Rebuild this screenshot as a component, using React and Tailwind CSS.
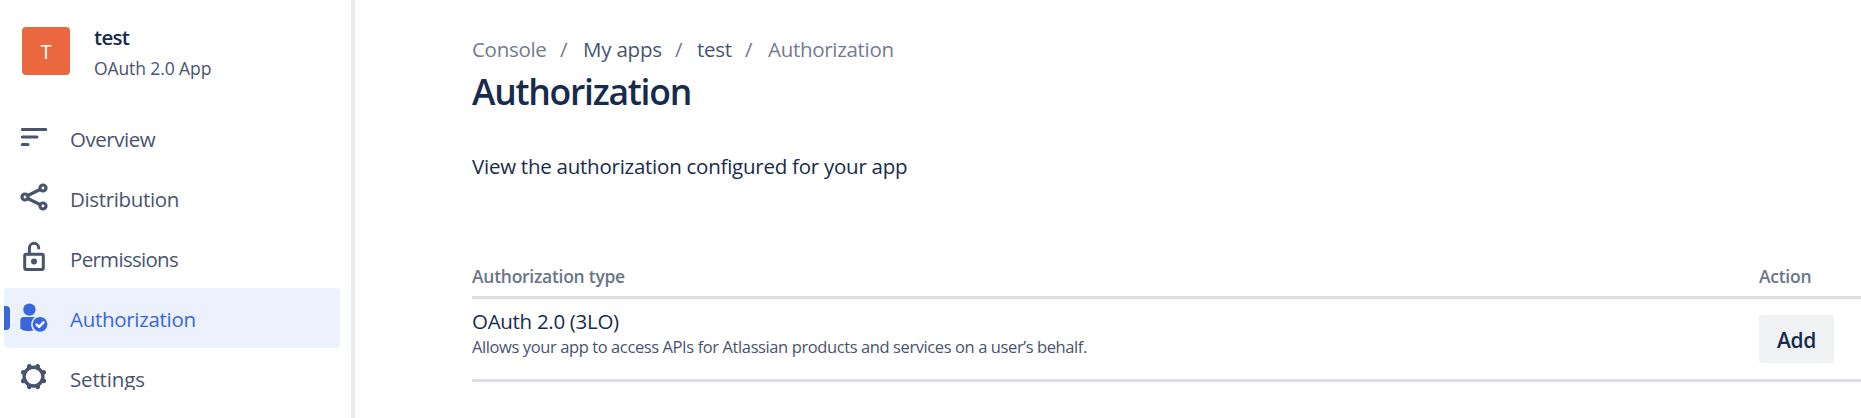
import React from "react";

const OverviewIcon = () => (
  <svg width="28" height="28" viewBox="0 0 28 28" fill="none" stroke="currentColor" strokeWidth="3" strokeLinecap="round">
    <path d="M2.3 6.5h23.5M2.3 14h14.7M2.3 21.5h5.7" />
  </svg>
);

const ShareIcon = () => (
  <svg width="28" height="28" viewBox="0 0 28 28" fill="none" stroke="currentColor" strokeWidth="3.2">
    <circle cx="5" cy="14" r="3" />
    <circle cx="23" cy="5" r="3" />
    <circle cx="23" cy="23" r="3" />
    <path d="M7.8 12.5 20 6.5M7.8 15.5 20 21.5" />
  </svg>
);

const LockIcon = () => (
  <svg width="28" height="32" viewBox="0 0 28 32" fill="none" stroke="currentColor" strokeWidth="3" strokeLinecap="round">
    <rect x="4.7" y="13.2" width="18.6" height="15.2" rx="1.5" />
    <path d="M9.4 13V7a4.65 4.65 0 0 1 9.3 0" />
    <circle cx="14" cy="20.4" r="3" fill="currentColor" stroke="none" />
  </svg>
);

const UserCheckIcon = () => (
  <svg width="28" height="30" viewBox="0 0 28 30" fill="none">
    <circle cx="9.4" cy="7.6" r="6.2" fill="currentColor" />
    <path d="M0.3 18.5a3.5 3.5 0 0 1 3.5-3.5H15c-2.5 2-3.8 4.5-3.8 7.5 0 2.3.8 4.4 2.2 6-1.3.3-2.5.4-3.9.4-6 0-9.2-1.3-9.2-3.2z" fill="currentColor" />
    <circle cx="20" cy="22.3" r="7.4" fill="currentColor" />
    <path d="m16.7 22.6 2.4 2.3 4.4-4.6" stroke="#fff" strokeWidth="2.5" strokeLinecap="round" strokeLinejoin="round" />
  </svg>
);

const GearIcon = () => (
  <svg width="28" height="28" viewBox="0 0 28 28" fill="none" stroke="currentColor">
    <circle cx="13.5" cy="13.6" r="9.4" strokeWidth="3.4" />
    {[22.5, 67.5, 112.5, 157.5, 202.5, 247.5, 292.5, 337.5].map((a) => (
      <path key={a} d="M13.5 3.5V2.4" strokeWidth="4.6" strokeLinecap="round" transform={`rotate(${a} 13.5 13.6)`} />
    ))}
  </svg>
);

const items = [
  { label: "Overview", Icon: OverviewIcon, track: "tracking-[-0.45px]" },
  { label: "Distribution", Icon: ShareIcon, track: "tracking-[-0.35px]" },
  { label: "Permissions", Icon: LockIcon, track: "tracking-[-0.7px]" },
  { label: "Authorization", Icon: UserCheckIcon, track: "tracking-[-0.3px]", selected: true },
  { label: "Settings", Icon: GearIcon, track: "tracking-[-0.15px]", clipped: true },
];

function NavItem({ label, Icon, track, selected, clipped }) {
  return (
    <a className={`relative flex h-[60px] w-[336px] items-center overflow-hidden rounded pl-4 ${selected ? "bg-[#ebf1fd] text-[#3a66dc]" : "text-[#48546f]"}`}>
      {selected && <span className="absolute left-0 top-[18px] h-6 w-1.5 rounded-r bg-[#3a66dc]" />}
      <span className="flex w-[50px] shrink-0 -mt-0.5"><Icon /></span>
      <span className={`mt-0.5 text-[20.5px] leading-[30px] ${track} ${clipped ? "[clip-path:inset(0_0_4px_0)]" : ""}`}>{label}</span>
    </a>
  );
}

export default function App() {
  return (
    <div className="flex h-[418px] w-[1861px] overflow-hidden bg-white font-['Open_Sans','Noto_Sans',sans-serif] whitespace-nowrap text-[#172b4d]">
      <aside className="w-[355px] shrink-0 border-r-4 border-[#ebecf0] pl-1">
        <header className="flex h-[108px] pl-[18px] pt-[27px]">
          <div className="flex size-12 items-center justify-center rounded bg-[#eb6740] text-[20px] text-white pt-0.5">T</div>
          <div className="ml-6 -mt-[5px]">
            <div className="text-[20.5px] font-semibold leading-[30px] tracking-[-0.7px]">test</div>
            <div className="mt-px text-[17.5px] leading-[30px] tracking-[-0.1px] text-[#48546f]">OAuth 2.0 App</div>
          </div>
        </header>
        <nav>{items.map((i) => <NavItem key={i.label} {...i} />)}</nav>
      </aside>
      <main className="min-w-0 flex-1 pl-[117px] pt-[34px]">
        <nav className="flex text-[20.5px] leading-[30px] tracking-[-0.3px] text-[#737b8e]">
          <span className="w-[88px]">Console</span>
          <span className="w-[23px]">/</span>
          <span className="w-[92px] tracking-[-0.2px] text-[#48546f]">My apps</span>
          <span className="w-[22px]">/</span>
          <span className="w-[48px] text-[#48546f]">test</span>
          <span className="w-[23px]">/</span>
          <span>Authorization</span>
        </nav>
        <h1 className="mt-1.5 text-[35.5px] font-semibold leading-[42px] tracking-[-1.25px]">Authorization</h1>
        <p className="mt-[39px] text-[20.5px] leading-[30px] tracking-[-0.25px]">View the authorization configured for your app</p>
        <section className="mt-[80px]">
          <div className="flex h-[38px] border-b-[3px] border-[#dddee4] text-[17.5px] font-semibold leading-[30px] tracking-[-0.27px] text-[#6b7589]">
            <span className="w-[1287px]">Authorization type</span>
            <span>Action</span>
          </div>
          <div className="flex h-[83px] border-b-[3px] border-[#dddee4]">
            <div className="w-[1287px] pt-[7px]">
              <div className="text-[20.5px] leading-[30px] tracking-[-0.3px]">OAuth 2.0 (3LO)</div>
              <div className="mt-px text-[16.5px] leading-[20px] tracking-[-0.4px] text-[#48546f]">Allows your app to access APIs for Atlassian products and services on a user’s behalf.</div>
            </div>
            <button className="mt-4 flex h-12 w-[75px] items-center justify-center rounded bg-[#f0f1f3] pt-[3px] text-[21px] font-semibold tracking-[-0.3px]">Add</button>
          </div>
        </section>
      </main>
    </div>
  );
}
